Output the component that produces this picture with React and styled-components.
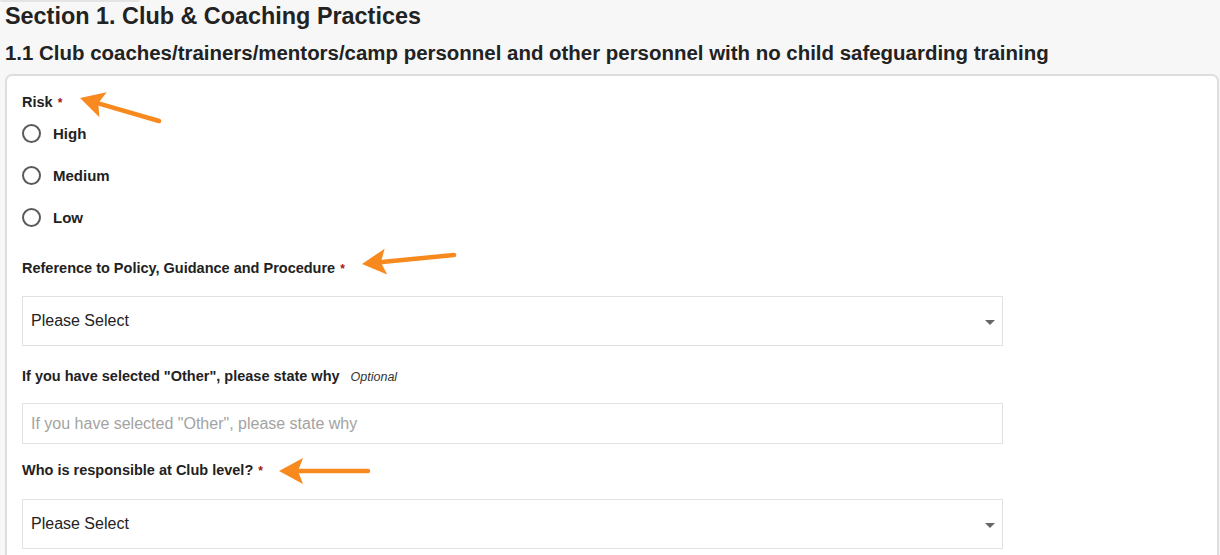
import React from "react";
import styled, { createGlobalStyle } from "styled-components";

const Global = createGlobalStyle`
  html, body { margin: 0; padding: 0; background: #f7f7f7; }
  body { font-family: "Liberation Sans", Arial, Helvetica, sans-serif; color: #222; }
  * { box-sizing: border-box; }
`;

const Page = styled.div`
  position: relative;
  padding: 0 1px 0 5px;
  width: 1220px;
  height: 555px;
  overflow: hidden;
`;

const TopEdge = styled.div`
  width: 140px;
  height: 2px;
  margin-left: -5px;
  background: #e4e4e4;
  border-radius: 0 0 3px 3px;
`;

const SectionTitle = styled.h1`
  margin: 2px 0 0;
  font-size: 23.4px;
  line-height: 24px;
  font-weight: 700;
  color: #222;
`;

const SubTitle = styled.h2`
  margin: 14px 0 0;
  font-size: 20.45px;
  line-height: 22px;
  font-weight: 700;
  color: #222;
  white-space: nowrap;
`;

const Card = styled.div`
  margin-top: 10px;
  background: #fff;
  border: 2px solid #dddddd;
  border-radius: 7px;
  padding: 16px 15px 40px;
  min-height: 520px;
`;

const Label = styled.div`
  display: block;
  height: 20px;
  font-size: 14.5px;
  line-height: 20px;
  font-weight: 700;
  color: #222;
  white-space: nowrap;
  margin-bottom: ${(p) => p.$mb || 0}px;
`;

const Req = styled.span`
  color: #a31515;
  font-weight: 700;
  font-size: 12px;
  line-height: 1;
  margin-left: 5px;
`;

const Opt = styled.span`
  font-style: italic;
  font-weight: 400;
  font-size: 12.5px;
  line-height: 1;
  color: #333;
  margin-left: 11px;
`;

const RadioList = styled.div`
  display: flex;
  flex-direction: column;
  margin-bottom: 20px;
`;

const RadioRow = styled.label`
  display: flex;
  align-items: center;
  height: 42px;
  gap: 12px;
  font-size: 15px;
  font-weight: 700;
  color: #222;
`;

const RadioCircle = styled.span`
  width: 19px;
  height: 19px;
  border-radius: 50%;
  border: 2px solid #5a5a5a;
  background: #fff;
  flex: none;
`;

const Group = styled.div`
  margin-bottom: ${(p) => p.$mb}px;
`;

const SelectBox = styled.div`
  width: 981px;
  height: 50px;
  border: 1px solid #e2e2e2;
  display: flex;
  align-items: center;
  justify-content: space-between;
  padding: 0 7px 0 8px;
  font-size: 16px;
  color: #222;
`;

const Caret = styled.span`
  width: 0;
  height: 0;
  border-left: 5px solid transparent;
  border-right: 5px solid transparent;
  border-top: 5px solid #666;
  margin-top: 3px;
`;

const TextInput = styled.input`
  display: block;
  width: 981px;
  height: 41px;
  border: 1px solid #e2e2e2;
  padding: 0 8px;
  font-size: 16px;
  font-family: "Liberation Sans", Arial, sans-serif;
  color: #222;
  outline: none;
  &::placeholder { color: #a3a3a3; }
`;

const Overlay = styled.svg`
  position: absolute;
  left: 0;
  top: 0;
  pointer-events: none;
`;

const ORANGE = "#f8891f";

function Arrow({ tail, tip }) {
  const [tx, ty] = tail;
  const [px, py] = tip;
  const dx = px - tx, dy = py - ty;
  const len = Math.hypot(dx, dy);
  const ux = dx / len, uy = dy / len;
  const headLen = 24, headW = 13;
  const bx = px - ux * headLen, by = py - uy * headLen;
  const nx = -uy, ny = ux;
  const pts = `${px},${py} ${bx + nx * headW},${by + ny * headW} ${bx + ux * 5},${by + uy * 5} ${bx - nx * headW},${by - ny * headW}`;
  return (
    <g>
      <line x1={tx} y1={ty} x2={bx + ux * 4} y2={by + uy * 4} stroke={ORANGE} strokeWidth="4.5" strokeLinecap="round" />
      <polygon points={pts} fill={ORANGE} />
    </g>
  );
}

export default function App() {
  return (
    <>
      <Global />
      <Page>
        <TopEdge />
        <SectionTitle>Section 1. Club &amp; Coaching Practices</SectionTitle>
        <SubTitle>1.1 Club coaches/trainers/mentors/camp personnel and other personnel with no child safeguarding training</SubTitle>
        <Card>
          <Label>Risk<Req>*</Req></Label>
          <RadioList>
            {["High", "Medium", "Low"].map((o) => (
              <RadioRow key={o}>
                <RadioCircle />
                {o}
              </RadioRow>
            ))}
          </RadioList>
          <Group $mb={20}>
            <Label $mb={18}>Reference to Policy, Guidance and Procedure<Req>*</Req></Label>
            <SelectBox>Please Select<Caret /></SelectBox>
          </Group>
          <Group $mb={16}>
            <Label $mb={17}>If you have selected "Other", please state why<Opt>Optional</Opt></Label>
            <TextInput placeholder={'If you have selected "Other", please state why'} />
          </Group>
          <Group $mb={0}>
            <Label $mb={19}>Who is responsible at Club level?<Req>*</Req></Label>
            <SelectBox>Please Select<Caret /></SelectBox>
          </Group>
        </Card>
        <Overlay width="1220" height="555" viewBox="0 0 1220 555">
          <Arrow tail={[159, 121]} tip={[80, 98]} />
          <Arrow tail={[454, 255]} tip={[362, 264]} />
          <Arrow tail={[368, 471]} tip={[279, 471]} />
        </Overlay>
      </Page>
    </>
  );
}
